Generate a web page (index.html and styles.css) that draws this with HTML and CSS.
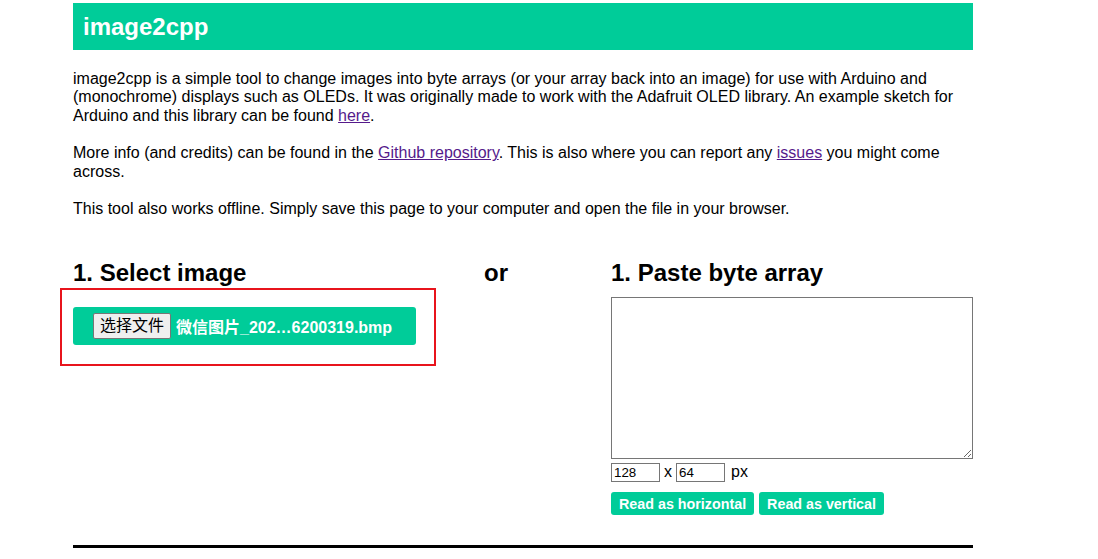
FILE: index.html
```html
<!DOCTYPE html>
<html>
<head>
<meta charset="utf-8">
<link rel="stylesheet" href="styles.css">
</head>
<body>
<div class="page">
  <header class="banner"><h1>image2cpp</h1></header>
  <p>image2cpp is a simple tool to change images into byte arrays (or your array back into an image) for use with Arduino and (monochrome) displays such as OLEDs. It was originally made to work with the Adafruit OLED library. An example sketch for Arduino and this library can be found <a href="#">here</a>.</p>
  <p>More info (and credits) can be found in the <a href="#">Github repository</a>. This is also where you can report any <a href="#">issues</a> you might come across.</p>
  <p>This tool also works offline. Simply save this page to your computer and open the file in your browser.</p>

  <div class="sections">
    <div class="col-left">
      <h2>1. Select image</h2>
      <div class="file-box">
        <span class="file-btn">选择文件</span>
        <span class="file-name">微信图片_202…6200319.bmp</span>
        <div class="highlight"></div>
      </div>
    </div>
    <div class="col-or">
      <h2>or</h2>
    </div>
    <div class="col-right">
      <h2>1. Paste byte array</h2>
      <textarea class="bytes"></textarea>
      <div class="dims">
        <input class="dim" type="text" value="128"><span class="sep">x</span><input class="dim" type="text" value="64"><span class="unit">px</span>
      </div>
      <div class="actions">
        <button class="btn">Read as horizontal</button>
        <button class="btn">Read as vertical</button>
      </div>
    </div>
  </div>
  <hr class="rule">
</div>
</body>
</html>
```
FILE: styles.css
```css
html, body {
  margin: 0;
  padding: 0;
  background: #fff;
}
body {
  font-family: "Liberation Sans", Arial, sans-serif;
  font-size: 16px;
  color: #000;
}
.page {
  width: 900px;
  margin: 0 0 0 73px;
  padding-top: 3px;
}
.banner {
  background: #00cc99;
  height: 47px;
  display: flex;
  align-items: center;
  padding-left: 10px;
}
.banner h1 {
  margin: 0;
  color: #fff;
  font-size: 24px;
  font-weight: bold;
}
p {
  margin: 19px 0;
  line-height: 18.4px;
}
p:first-of-type {
  margin-top: 20px;
}
a {
  color: #551a8b;
  text-decoration: underline;
}
.sections {
  display: flex;
  margin-top: 41px;
}
.col-left {
  width: 411px;
}
.col-or {
  width: 127px;
}
.col-right {
  width: 362px;
}
h2 {
  margin: 0;
  font-size: 24px;
  font-weight: bold;
  line-height: 28px;
}
.file-box {
  position: relative;
  margin-top: 20px;
  width: 343px;
  box-sizing: border-box;
  height: 38px;
  background: #00cc99;
  border-radius: 3px;
  display: flex;
  align-items: center;
  padding-left: 20px;
}
.file-btn {
  display: inline-block;
  box-sizing: border-box;
  height: 26px;
  line-height: 24px;
  padding: 0 6px;
  background: #efefef;
  border: 1px solid #767676;
  border-radius: 2px;
  font-family: "Liberation Sans", "Noto Sans CJK SC", sans-serif;
  font-size: 16px;
  color: #000;
}
.file-name {
  margin-left: 5px;
  color: #fff;
  font-weight: bold;
  font-family: "Liberation Sans", "Noto Sans CJK SC", sans-serif;
  font-size: 16px;
}
.highlight {
  position: absolute;
  left: -13px;
  top: -19px;
  width: 376px;
  height: 78px;
  box-sizing: border-box;
  border: 2px solid #e8141c;
  pointer-events: none;
}
.bytes {
  display: block;
  margin: 10px 0 0 0;
  width: 362px;
  height: 162px;
  box-sizing: border-box;
  border: 1px solid #767676;
  border-radius: 0;
  resize: both;
}
.dims {
  display: flex;
  align-items: center;
  margin-top: 3px;
  height: 20px;
}
.dim {
  width: 49px;
  height: 19px;
  box-sizing: border-box;
  margin: 0;
  padding: 1px 2px;
  border: 1px solid #767676;
  font-family: "Liberation Sans", Arial, sans-serif;
  font-size: 13.33px;
}
.sep {
  margin: 0 4px;
}
.unit {
  margin-left: 6px;
}
.actions {
  display: flex;
  gap: 5px;
  margin-top: 10px;
}
.btn {
  background: #00cc99;
  color: #fff;
  border: none;
  border-radius: 3px;
  height: 23px;
  padding: 0 8px;
  font-family: "Liberation Sans", Arial, sans-serif;
  font-weight: bold;
  font-size: 14.3px;
}
.rule {
  margin: 30px 0 0 0;
  border: none;
  height: 3px;
  background: #000;
}
```
